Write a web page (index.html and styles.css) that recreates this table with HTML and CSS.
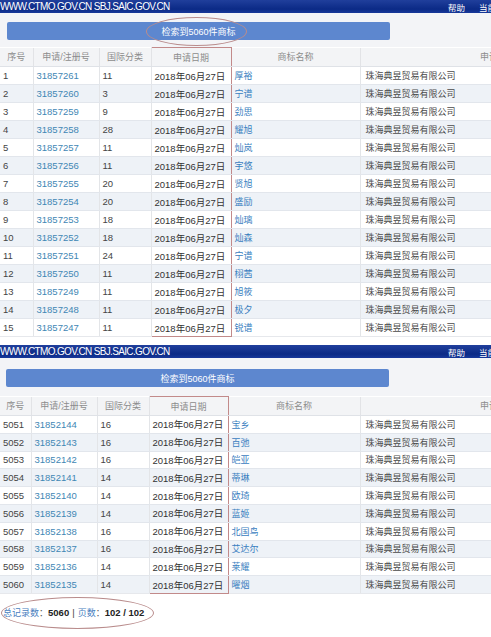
FILE: index.html
```html
<!DOCTYPE html>
<html lang="zh-CN">
<head>
<meta charset="utf-8">
<title>商标检索</title>
<link rel="stylesheet" href="styles.css">
</head>
<body>
<section class="shot shot-one">
  <div class="topbar">
    <span class="site">WWW.CTMO.GOV.CN SBJ.SAIC.GOV.CN</span>
    <span class="links"><span>帮助</span><span>当前</span></span>
  </div>
  <div class="toolbar">
    <div class="btn">检索到5060件商标<span class="ring ring-btn"></span></div>
  </div>
  <table class="grid">
    <colgroup><col class="c1"><col class="c2"><col class="c3"><col class="c4"><col class="c5"><col class="c6"></colgroup>
    <thead>
      <tr><th>序号</th><th>申请/注册号</th><th>国际分类</th><th class="date">申请日期</th><th>商标名称</th><th>申请人名称</th></tr>
    </thead>
    <tbody>
      <tr><td>1</td><td class="no">31857261</td><td>11</td><td class="date">2018年06月27日</td><td class="tm">厚裕</td><td class="ap">珠海典昱贸易有限公司</td></tr>
      <tr><td>2</td><td class="no">31857260</td><td>3</td><td class="date">2018年06月27日</td><td class="tm">宁谱</td><td class="ap">珠海典昱贸易有限公司</td></tr>
      <tr><td>3</td><td class="no">31857259</td><td>9</td><td class="date">2018年06月27日</td><td class="tm">劲思</td><td class="ap">珠海典昱贸易有限公司</td></tr>
      <tr><td>4</td><td class="no">31857258</td><td>28</td><td class="date">2018年06月27日</td><td class="tm">耀旭</td><td class="ap">珠海典昱贸易有限公司</td></tr>
      <tr><td>5</td><td class="no">31857257</td><td>11</td><td class="date">2018年06月27日</td><td class="tm">灿岚</td><td class="ap">珠海典昱贸易有限公司</td></tr>
      <tr><td>6</td><td class="no">31857256</td><td>11</td><td class="date">2018年06月27日</td><td class="tm">宇悠</td><td class="ap">珠海典昱贸易有限公司</td></tr>
      <tr><td>7</td><td class="no">31857255</td><td>20</td><td class="date">2018年06月27日</td><td class="tm">贤旭</td><td class="ap">珠海典昱贸易有限公司</td></tr>
      <tr><td>8</td><td class="no">31857254</td><td>20</td><td class="date">2018年06月27日</td><td class="tm">盛励</td><td class="ap">珠海典昱贸易有限公司</td></tr>
      <tr><td>9</td><td class="no">31857253</td><td>18</td><td class="date">2018年06月27日</td><td class="tm">灿璃</td><td class="ap">珠海典昱贸易有限公司</td></tr>
      <tr><td>10</td><td class="no">31857252</td><td>18</td><td class="date">2018年06月27日</td><td class="tm">灿森</td><td class="ap">珠海典昱贸易有限公司</td></tr>
      <tr><td>11</td><td class="no">31857251</td><td>24</td><td class="date">2018年06月27日</td><td class="tm">宁谱</td><td class="ap">珠海典昱贸易有限公司</td></tr>
      <tr><td>12</td><td class="no">31857250</td><td>11</td><td class="date">2018年06月27日</td><td class="tm">栩茜</td><td class="ap">珠海典昱贸易有限公司</td></tr>
      <tr><td>13</td><td class="no">31857249</td><td>11</td><td class="date">2018年06月27日</td><td class="tm">旭筱</td><td class="ap">珠海典昱贸易有限公司</td></tr>
      <tr><td>14</td><td class="no">31857248</td><td>11</td><td class="date">2018年06月27日</td><td class="tm">极夕</td><td class="ap">珠海典昱贸易有限公司</td></tr>
      <tr class="last"><td>15</td><td class="no">31857247</td><td>11</td><td class="date">2018年06月27日</td><td class="tm">锐谱</td><td class="ap">珠海典昱贸易有限公司</td></tr>
    </tbody>
  </table>
</section>

<section class="shot shot-two">
  <div class="topbar">
    <span class="site">WWW.CTMO.GOV.CN SBJ.SAIC.GOV.CN</span>
    <span class="links"><span>帮助</span><span>当前</span></span>
  </div>
  <div class="toolbar toolbar-two">
    <div class="btn">检索到5060件商标</div>
  </div>
  <table class="grid grid-two">
    <colgroup><col class="c1"><col class="c2"><col class="c3"><col class="c4"><col class="c5"><col class="c6"></colgroup>
    <thead>
      <tr><th>序号</th><th>申请/注册号</th><th>国际分类</th><th class="date">申请日期</th><th>商标名称</th><th>申请人名称</th></tr>
    </thead>
    <tbody>
      <tr><td>5051</td><td class="no">31852144</td><td>16</td><td class="date">2018年06月27日</td><td class="tm">宝乡</td><td class="ap">珠海典昱贸易有限公司</td></tr>
      <tr><td>5052</td><td class="no">31852143</td><td>16</td><td class="date">2018年06月27日</td><td class="tm">百弛</td><td class="ap">珠海典昱贸易有限公司</td></tr>
      <tr><td>5053</td><td class="no">31852142</td><td>16</td><td class="date">2018年06月27日</td><td class="tm">皑亚</td><td class="ap">珠海典昱贸易有限公司</td></tr>
      <tr><td>5054</td><td class="no">31852141</td><td>14</td><td class="date">2018年06月27日</td><td class="tm">蒂琳</td><td class="ap">珠海典昱贸易有限公司</td></tr>
      <tr><td>5055</td><td class="no">31852140</td><td>14</td><td class="date">2018年06月27日</td><td class="tm">欧琦</td><td class="ap">珠海典昱贸易有限公司</td></tr>
      <tr><td>5056</td><td class="no">31852139</td><td>14</td><td class="date">2018年06月27日</td><td class="tm">蓝姬</td><td class="ap">珠海典昱贸易有限公司</td></tr>
      <tr><td>5057</td><td class="no">31852138</td><td>16</td><td class="date">2018年06月27日</td><td class="tm">北国鸟</td><td class="ap">珠海典昱贸易有限公司</td></tr>
      <tr><td>5058</td><td class="no">31852137</td><td>16</td><td class="date">2018年06月27日</td><td class="tm">艾达尔</td><td class="ap">珠海典昱贸易有限公司</td></tr>
      <tr><td>5059</td><td class="no">31852136</td><td>14</td><td class="date">2018年06月27日</td><td class="tm">莱耀</td><td class="ap">珠海典昱贸易有限公司</td></tr>
      <tr class="last"><td>5060</td><td class="no">31852135</td><td>14</td><td class="date">2018年06月27日</td><td class="tm">曜烟</td><td class="ap">珠海典昱贸易有限公司</td></tr>
    </tbody>
  </table>
</section>

<div class="summary">
  <span class="lbl">总记录数</span><span class="sep">：</span><b>5060</b><span class="bar">|</span><span class="lbl">页数</span><span class="sep">：</span><b>102 / 102</b>
  <span class="ring ring-sum"></span>
</div>
</body>
</html>
```
FILE: styles.css
```css
html, body {
  margin: 0;
  padding: 0;
  overflow: hidden;
  background: #fff;
}
body {
  width: 491px;
  height: 637px;
  font-family: "Liberation Sans", "Noto Sans CJK SC", sans-serif;
  font-size: 9.5px;
  color: #444;
}
.shot {
  width: 491px;
  overflow: hidden;
}
.topbar {
  height: 13px;
  background: linear-gradient(#203f9c, #0b2a86 70%, #17389a);
  color: #fff;
  display: flex;
  align-items: center;
  justify-content: space-between;
  white-space: nowrap;
}
.site {
  font-size: 10px;
  letter-spacing: -0.65px;
}
.links {
  display: flex;
  gap: 14px;
  font-size: 8.5px;
  margin-right: -5px;
}
.toolbar {
  height: 34px;
  background: #f3f4f7;
  padding: 9px 0 0 7px;
  box-sizing: border-box;
}
.toolbar-two {
  height: 38px;
  padding: 11px 0 0 6px;
}
.btn {
  position: relative;
  width: 383px;
  height: 18px;
  background: #5d87cf;
  border-radius: 2px;
  color: #fff;
  font-size: 9px;
  display: flex;
  align-items: center;
  justify-content: center;
}
.ring {
  position: absolute;
  border: 1px solid #b98c8c;
  border-radius: 50%;
  box-sizing: border-box;
}
.ring-btn {
  left: 139px;
  top: -5px;
  width: 101px;
  height: 29px;
}
.grid {
  width: 645px;
  table-layout: fixed;
  border-collapse: collapse;
  white-space: nowrap;
}
.c1 { width: 33px; }
.c2 { width: 66px; }
.c3 { width: 52px; }
.c4 { width: 80px; }
.c5 { width: 129px; }
.c6 { width: 285px; }
.grid-two .c1 { width: 31px; }
.grid-two .c2 { width: 66px; }
.grid-two .c3 { width: 52px; }
.grid-two .c4 { width: 79px; }
.grid-two .c5 { width: 132px; }
.grid th {
  height: 18px;
  padding: 0;
  background: #f3f4f6;
  color: #8c8c8c;
  font-weight: normal;
  font-size: 9px;
  text-align: center;
  border-right: 1px solid #e2e3e6;
  border-bottom: 1px solid #dfe2e7;
}
.grid td {
  height: 17px;
  padding: 0 3px;
  border-right: 1px solid #e3e5e8;
  border-bottom: 1px solid #e2e6ec;
  overflow: hidden;
}
.grid-two td { height: 16.8px; }
.grid tbody tr:nth-child(even) td {
  background: #eef2f7;
}
.grid td.no { color: #3f87b4; }
.grid td.date { color: #333; padding-left: 3px; }
.grid td.tm { color: #3a80c0; font-size: 9px; }
.grid td.ap { color: #4a4a4a; padding-left: 5px; font-size: 9px; }
.grid .date {
  border-left: 1px solid #c28a8a;
  border-right: 1px solid #c28a8a;
}
.grid th.date { border-top: 1px solid #c28a8a; }
.grid tr.last td { border-bottom-color: #e6e8ec; }
.grid tr.last td.date { border-bottom: 1px solid #c28a8a; }

.shot-one { margin-bottom: 8px; }

.summary {
  position: relative;
  margin-top: 12px;
  margin-left: 3px;
  width: 152px;
  height: 14px;
  display: flex;
  align-items: center;
  white-space: nowrap;
  font-size: 9.5px;
  color: #333;
}
.summary .lbl { color: #4b7fbf; font-size: 9px; }
.summary .sep { color: #555; font-size: 9px; }
.summary b { color: #222; }
.summary .bar { margin: 0 3px; color: #444; }
.ring-sum {
  left: -2px;
  top: -9px;
  width: 153px;
  height: 32px;
}
```
